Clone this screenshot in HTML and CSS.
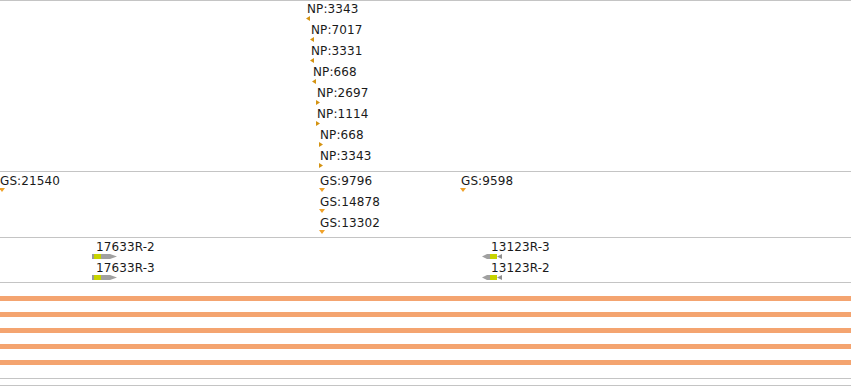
FILE: index.html
```html
<!DOCTYPE html>
<html lang="en">
<head>
  <meta charset="UTF-8" />
  <title>Tracks</title>
  <link rel="stylesheet" href="styles.css">
</head>
<body>
  <div class="track track-np">
    <div class="feat" style="left:306px;top:0px"><span class="label">NP:3343</span><svg class="tri tri-np" width="4" height="5"><polygon points="0,2.5 4,0 4,5"/></svg></div>
    <div class="feat" style="left:310px;top:21px"><span class="label">NP:7017</span><svg class="tri tri-np" width="4" height="5"><polygon points="0,2.5 4,0 4,5"/></svg></div>
    <div class="feat" style="left:310px;top:42px"><span class="label">NP:3331</span><svg class="tri tri-np" width="4" height="5"><polygon points="0,2.5 4,0 4,5"/></svg></div>
    <div class="feat" style="left:312px;top:63px"><span class="label">NP:668</span><svg class="tri tri-np" width="4" height="5"><polygon points="0,2.5 4,0 4,5"/></svg></div>
    <div class="feat" style="left:316px;top:84px"><span class="label">NP:2697</span><svg class="tri tri-np" width="4" height="5"><polygon points="0,0 4,2.5 0,5"/></svg></div>
    <div class="feat" style="left:316px;top:105px"><span class="label">NP:1114</span><svg class="tri tri-np" width="4" height="5"><polygon points="0,0 4,2.5 0,5"/></svg></div>
    <div class="feat" style="left:319px;top:126px"><span class="label">NP:668</span><svg class="tri tri-np" width="4" height="5"><polygon points="0,0 4,2.5 0,5"/></svg></div>
    <div class="feat" style="left:319px;top:147px"><span class="label">NP:3343</span><svg class="tri tri-np" width="4" height="5"><polygon points="0,0 4,2.5 0,5"/></svg></div>
  </div>

  <div class="track track-gs">
    <div class="feat" style="left:-1px;top:1px"><span class="label">GS:21540</span><svg class="tri tri-gs" width="6" height="4"><polygon points="0,0 6,0 3,4"/></svg></div>
    <div class="feat" style="left:319px;top:1px"><span class="label">GS:9796</span><svg class="tri tri-gs" width="6" height="4"><polygon points="0,0 6,0 3,4"/></svg></div>
    <div class="feat" style="left:460px;top:1px"><span class="label">GS:9598</span><svg class="tri tri-gs" width="6" height="4"><polygon points="0,0 6,0 3,4"/></svg></div>
    <div class="feat" style="left:319px;top:22px"><span class="label">GS:14878</span><svg class="tri tri-gs" width="6" height="4"><polygon points="0,0 6,0 3,4"/></svg></div>
    <div class="feat" style="left:319px;top:43px"><span class="label">GS:13302</span><svg class="tri tri-gs" width="6" height="4"><polygon points="0,0 6,0 3,4"/></svg></div>
  </div>

  <div class="track track-tx">
    <div class="feat" style="left:92px;top:1px"><span class="label label-in">17633R-2</span>
      <svg class="gene" width="25" height="5"><rect x="0" y="0" width="2" height="5" fill="#9a9a9a"/><rect x="2" y="0" width="7" height="5" fill="#c8d400"/><polygon points="9,0 18,0 25,2.5 18,5 9,5" fill="#a0a0a0"/></svg></div>
    <div class="feat" style="left:92px;top:22px"><span class="label label-in">17633R-3</span>
      <svg class="gene" width="25" height="5"><rect x="0" y="0" width="2" height="5" fill="#9a9a9a"/><rect x="2" y="0" width="7" height="5" fill="#c8d400"/><polygon points="9,0 18,0 25,2.5 18,5 9,5" fill="#a0a0a0"/></svg></div>
    <div class="feat" style="left:482px;top:1px"><span class="label label-rev">13123R-3</span>
      <svg class="gene" width="21" height="5"><polygon points="0,2.5 5,0 8,0 8,5 5,5" fill="#a0a0a0"/><rect x="8" y="0" width="7" height="5" fill="#c8d400"/><polygon points="15,2.5 20,0 20,5" fill="#909090"/></svg></div>
    <div class="feat" style="left:482px;top:22px"><span class="label label-rev">13123R-2</span>
      <svg class="gene" width="21" height="5"><polygon points="0,2.5 5,0 8,0 8,5 5,5" fill="#a0a0a0"/><rect x="8" y="0" width="7" height="5" fill="#c8d400"/><polygon points="15,2.5 20,0 20,5" fill="#909090"/></svg></div>
  </div>

  <div class="track track-bars">
    <div class="bar"></div>
    <div class="bar"></div>
    <div class="bar"></div>
    <div class="bar"></div>
    <div class="bar"></div>
  </div>

  <div class="track track-empty"></div>
  <div class="track track-end"></div>
</body>
</html>
```

FILE: styles.css
```css
html, body {
  margin: 0;
  padding: 0;
  background: #fff;
  height: 100%;
  overflow: hidden;
  font-family: 'DejaVu Sans', sans-serif;
  font-size: 12px;
  color: #1a1a1a;
}

.track {
  position: relative;
  border-top: 1px solid #c4c4c4;
}

.track-np { height: 170px; }
.track-gs { height: 65px; }
.track-tx { height: 44px; }
.track-empty { height: 6px; }
.track-end { height: 0; }

.track-bars {
  height: 82px;
  padding-top: 13px;
  display: flex;
  flex-direction: column;
  gap: 11px;
}

.bar {
  height: 5px;
  background: #f4a470;
}

.feat {
  position: absolute;
  display: flex;
  flex-direction: column;
  align-items: flex-start;
}

.label {
  display: block;
  line-height: 14px;
  padding-top: 1px;
  margin-left: 1px;
  white-space: nowrap;
  letter-spacing: 0.1px;
}

.label-in { margin-left: 4px; }
.label-rev { margin-left: 9px; }

.tri { display: block; }
.tri-np polygon { fill: #d49312; }
.tri-gs polygon { fill: #f0a22a; }

.gene { display: block; }
```
